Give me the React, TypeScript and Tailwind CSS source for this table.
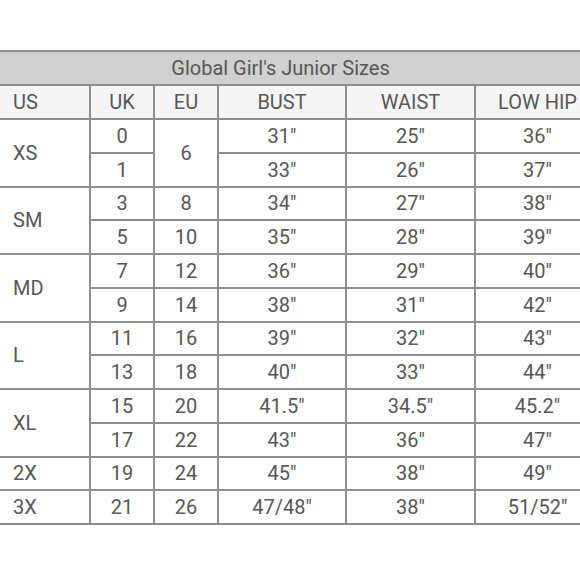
const rows: { us?: string; span?: number; uk: string; eu?: string; euSpan?: number; bust: string; waist: string; hip: string }[] = [
  { us: "XS", span: 2, uk: "0", eu: "6", euSpan: 2, bust: '31"', waist: '25"', hip: '36"' },
  { uk: "1", bust: '33"', waist: '26"', hip: '37"' },
  { us: "SM", span: 2, uk: "3", eu: "8", bust: '34"', waist: '27"', hip: '38"' },
  { uk: "5", eu: "10", bust: '35"', waist: '28"', hip: '39"' },
  { us: "MD", span: 2, uk: "7", eu: "12", bust: '36"', waist: '29"', hip: '40"' },
  { uk: "9", eu: "14", bust: '38"', waist: '31"', hip: '42"' },
  { us: "L", span: 2, uk: "11", eu: "16", bust: '39"', waist: '32"', hip: '43"' },
  { uk: "13", eu: "18", bust: '40"', waist: '33"', hip: '44"' },
  { us: "XL", span: 2, uk: "15", eu: "20", bust: '41.5"', waist: '34.5"', hip: '45.2"' },
  { uk: "17", eu: "22", bust: '43"', waist: '36"', hip: '47"' },
  { us: "2X", uk: "19", eu: "24", bust: '45"', waist: '38"', hip: '49"' },
  { us: "3X", uk: "21", eu: "26", bust: '47/48"', waist: '38"', hip: '51/52"' },
];

const cell = "border-2 border-[#8e8e8e] text-center";

export default function App() {
  return (
    <div className="h-[580px] w-[580px] overflow-hidden bg-white pt-[50px] font-['Roboto',sans-serif] text-[20px] leading-none text-[#575757]">
      <table className="w-[601px] table-fixed border-collapse -ml-[2px]">
        <colgroup>
          <col className="w-[91px]" />
          <col className="w-[64px]" />
          <col className="w-[64px]" />
          <col className="w-[128px]" />
          <col className="w-[129px]" />
          <col className="w-[125px]" />
        </colgroup>
        <thead>
          <tr className="h-[34px] bg-[#d0d0d0]">
            <th colSpan={6} className="border-2 border-[#8e8e8e] pr-[38px] text-center font-normal">
              Global Girl's Junior Sizes
            </th>
          </tr>
          <tr className="h-[34px] bg-[#f5f5f5]">
            <th className="border-2 border-[#8e8e8e] pl-[13px] text-left font-normal">US</th>
            <th className={`${cell} font-normal`}>UK</th>
            <th className={`${cell} font-normal`}>EU</th>
            <th className={`${cell} font-normal`}>BUST</th>
            <th className={`${cell} font-normal`}>WAIST</th>
            <th className={`${cell} font-normal`}>LOW HIP</th>
          </tr>
        </thead>
        <tbody>
          {rows.map((r, i) => (
            <tr key={i} className="h-[33.75px]">
              {r.us && (
                <td rowSpan={r.span ?? 1} className="border-2 border-[#8e8e8e] pl-[13px] text-left">
                  {r.us}
                </td>
              )}
              <td className={cell}>{r.uk}</td>
              {r.eu && (
                <td rowSpan={r.euSpan ?? 1} className={cell}>
                  {r.eu}
                </td>
              )}
              <td className={cell}>{r.bust}</td>
              <td className={cell}>{r.waist}</td>
              <td className={cell}>{r.hip}</td>
            </tr>
          ))}
        </tbody>
      </table>
    </div>
  );
}
